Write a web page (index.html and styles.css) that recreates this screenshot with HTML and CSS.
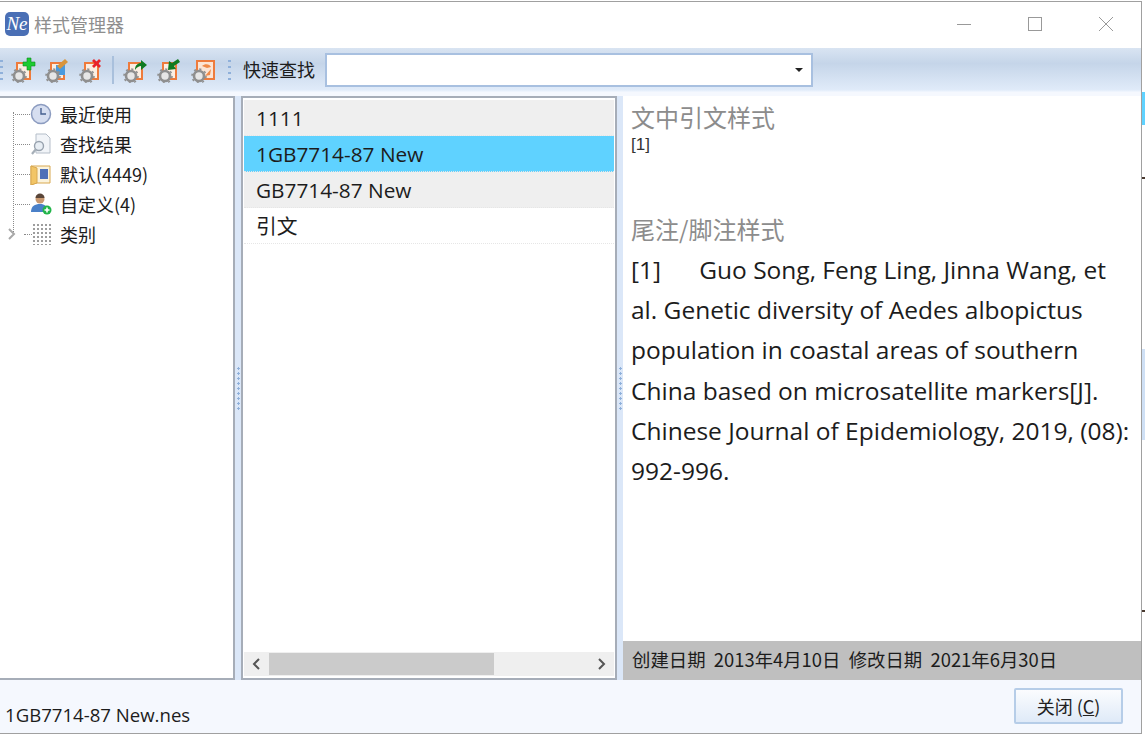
FILE: index.html
```html
<!DOCTYPE html>
<html lang="zh-CN">
<head>
    <meta charset="UTF-8">
    <title>样式管理器</title>
    <link rel="stylesheet" href="styles.css">
</head>
<body>
    <div class="window">
        <div class="titlebar">
            <div class="app-logo">Ne</div>
            <div class="title-text">样式管理器</div>
            <div class="win-buttons">
                <svg width="16" height="16" viewBox="0 0 16 16"><path d="M1 8.5h14" stroke="#999" fill="none"/></svg>
                <svg width="16" height="16" viewBox="0 0 16 16"><rect x="1.5" y="1.5" width="13" height="13" stroke="#999" fill="none"/></svg>
                <svg width="16" height="16" viewBox="0 0 16 16"><path d="M1 1l14 14M15 1L1 15" stroke="#999" fill="none"/></svg>
            </div>
        </div>

        <div class="toolbar">
            <span class="grip first"></span>
            <svg class="tool" viewBox="0 0 26 26"><use href="#page"/><use href="#gear"/><path d="M16 1h4v4h4v4h-4v4h-4V9h-4V5h4z" fill="#1ccb30" stroke="#0e8a1e" stroke-width=".6"/></svg>
            <svg class="tool" viewBox="0 0 26 26"><use href="#page"/><rect x="11" y="8" width="9" height="10" fill="#4a9ade"/><path d="M12 9l8-7 3 3-8 7z" fill="#d8953c"/><use href="#gear"/></svg>
            <svg class="tool" viewBox="0 0 26 26"><use href="#page"/><use href="#gear"/><path d="M14 3l7 7M21 3l-7 7" stroke="#e8222a" stroke-width="2.8" fill="none"/></svg>
            <span class="sep"></span>
            <svg class="tool" viewBox="0 0 26 26"><use href="#page"/><use href="#gear"/><path d="M12 13c0-5 3-7 6-7V3l6 5-6 5V9c-2 0-4 1-6 4z" fill="#0f7a20"/></svg>
            <svg class="tool" viewBox="0 0 26 26"><use href="#page"/><use href="#gear"/><path d="M12 4l3 2 6-4 2 3-6 4 2 3-8 1z" fill="#0f7a20"/></svg>
            <svg class="tool" viewBox="0 0 26 26"><rect x="6" y="4" width="17" height="18" fill="#fbe4d4" stroke="#ee7b3c" stroke-width="2"/><path d="M11 9c3-3 8-2 9 1l-4 1zM20 12l-1 6-5 1z" fill="#f08a48"/><use href="#gear"/></svg>
            <span class="grip"></span>
            <span class="search-label">快速查找</span>
            <div class="search-box"><span class="caret"></span></div>
        </div>

        <div class="panes">
            <div class="tree">
                <div class="tree-row">
                    <span class="dots"></span>
                    <svg class="node-icon" viewBox="0 0 22 22"><circle cx="11" cy="11" r="9.5" fill="#d6def0" stroke="#8c9cc0" stroke-width="1.5"/><path d="M11 5v6h5" stroke="#46608f" stroke-width="1.4" fill="none"/></svg>
                    <span>最近使用</span>
                </div>
                <div class="tree-row">
                    <span class="dots"></span>
                    <svg class="node-icon" viewBox="0 0 22 22"><path d="M6 1h10l4 4v15H6z" fill="#f1f4f8" stroke="#b5bec9"/><circle cx="9" cy="13" r="4.5" fill="#e8eef4" stroke="#98a2ae" stroke-width="1.4"/><path d="M6 16l-4 5" stroke="#a6afb8" stroke-width="2.2"/></svg>
                    <span>查找结果</span>
                </div>
                <div class="tree-row">
                    <span class="dots"></span>
                    <svg class="node-icon" viewBox="0 0 22 22"><path d="M1 3h19v17H6l-5 2z" fill="#fbf3dc" stroke="#d8a850"/><path d="M1 3l6 2v15l-6 2z" fill="#f2c566" stroke="#d8a850"/><rect x="10" y="6" width="8" height="10" fill="#4e70b8"/></svg>
                    <span>默认(4449)</span>
                </div>
                <div class="tree-row">
                    <span class="dots"></span>
                    <svg class="node-icon" viewBox="0 0 22 22"><circle cx="10" cy="6" r="4.5" fill="#c89870"/><path d="M5.5 5c0-6 9-6 9 0z" fill="#5a4638"/><path d="M1 19c0-6 4-8 9-8s7 2 7 8z" fill="#4a80c8"/><circle cx="17" cy="17" r="4.5" fill="#22b54a"/><path d="M17 14.5v5M14.5 17h5" stroke="#fff" stroke-width="1.6"/></svg>
                    <span>自定义(4)</span>
                </div>
                <div class="tree-row">
                    <svg class="expander" viewBox="0 0 10 12"><path d="M2 1l5 5-5 5" stroke="#a8a8a8" stroke-width="2" fill="none"/></svg>
                    <span class="dots short"></span>
                    <span class="grid-icon"></span>
                    <span>类别</span>
                </div>
                <div class="tree-line"></div>
            </div>

            <div class="splitter"><span class="split-grip"></span></div>

            <div class="list">
                <div class="list-rows">
                    <div class="list-row odd">1111</div>
                    <div class="list-row active">1GB7714-87 New</div>
                    <div class="list-row odd">GB7714-87 New</div>
                    <div class="list-row">引文</div>
                </div>
                <div class="hscroll">
                    <svg class="arrow" viewBox="0 0 10 12"><path d="M7 1L2 6l5 5" stroke="#555" stroke-width="2" fill="none"/></svg>
                    <div class="track"><div class="thumb"></div></div>
                    <svg class="arrow" viewBox="0 0 10 12"><path d="M3 1l5 5-5 5" stroke="#555" stroke-width="2" fill="none"/></svg>
                </div>
            </div>

            <div class="splitter"><span class="split-grip"></span></div>

            <div class="preview">
                <div class="preview-body">
                    <div class="preview-head">文中引文样式</div>
                    <div class="cite">[1]</div>
                    <div class="preview-head second">尾注/脚注样式</div>
                    <p class="ref">[1]&nbsp;&nbsp;&nbsp;&nbsp;&nbsp;&nbsp;Guo Song, Feng Ling, Jinna Wang, et al. Genetic diversity of Aedes albopictus population in coastal areas of southern China based on microsatellite markers[J]. Chinese Journal of Epidemiology, 2019, (08): 992-996.</p>
                </div>
                <div class="dates">创建日期&nbsp; 2013年4月10日&nbsp; 修改日期&nbsp; 2021年6月30日</div>
            </div>
        </div>

        <div class="footer">
            <div class="filename">1GB7714-87 New.nes</div>
            <button class="close-btn">关闭 (<u>C</u>)</button>
        </div>
    </div>

    <div class="backdrop">
        <span class="bit blue"></span>
        <span class="bit tick"></span>
        <span class="bit pale"></span>
        <span class="bit tick low"></span>
    </div>

    <svg class="defs" width="0" height="0">
        <defs>
            <g id="page"><rect x="6" y="6" width="13" height="16" fill="#fbeee2" stroke="#ee7b3c" stroke-width="2"/></g>
            <g id="gear">
                <circle cx="8" cy="19" r="5" fill="#e6e6e6" stroke="#8f8f8f" stroke-width="2.6"/>
                <circle cx="8" cy="19" r="7" fill="none" stroke="#8f8f8f" stroke-width="1.6" stroke-dasharray="2.2 3.3"/>
            </g>
        </defs>
    </svg>
</body>
</html>
```

FILE: styles.css
```css
* {
    box-sizing: border-box;
}
html, body {
    margin: 0;
    height: 736px;
    overflow: hidden;
}
body {
    background-color: #fff;
    font-family: "Liberation Sans", "Noto Sans CJK SC", sans-serif;
    color: #1c1c1c;
    padding: 1px 0 2px 0;
    display: flex;
}
.window {
    width: 1142px;
    height: 733px;
    flex-shrink: 0;
    display: flex;
    flex-direction: column;
    border-top: 1px solid #a0a0a0;
    border-right: 1px solid #a0a0a0;
    border-bottom: 1px solid #a0a0a0;
    background-color: #fff;
}
.backdrop {
    flex: 1;
    display: flex;
    flex-direction: column;
}
.bit {
    display: block;
}
.bit.blue {
    height: 33px;
    margin-top: 91px;
    background-color: #5fd2ff;
}
.bit.tick {
    height: 2px;
    margin-top: 52px;
    background-color: #4a3a30;
}
.bit.pale {
    height: 91px;
    margin-top: 170px;
    background-color: #cfe0f5;
}
.bit.tick.low {
    margin-top: 170px;
}
.defs {
    position: absolute;
}
.titlebar {
    height: 46px;
    display: flex;
    align-items: center;
    padding-left: 5px;
    padding-bottom: 2px;
    flex-shrink: 0;
}
.app-logo {
    width: 24px;
    height: 24px;
    border-radius: 5px;
    background-color: #4a6fb5;
    color: #fff;
    font-family: "Liberation Serif", serif;
    font-style: italic;
    font-size: 19px;
    line-height: 24px;
    text-align: center;
}
.title-text {
    margin-left: 5px;
    font-size: 18px;
    color: #8e8e8e;
    font-family: "Noto Sans CJK SC", sans-serif;
}
.win-buttons {
    margin-left: auto;
    display: flex;
    gap: 55px;
    padding-right: 27px;
}
.toolbar {
    height: 44px;
    flex-shrink: 0;
    display: flex;
    align-items: center;
    background: linear-gradient(to bottom, #d9e4f2 0%, #c5d5e9 35%, #e0ebf9 95%, #f2f7fe 100%);
}
.tool {
    width: 26px;
    height: 26px;
    margin-left: 8px;
}
.grip {
    width: 3px;
    height: 24px;
    margin-left: 11px;
    background-image: radial-gradient(circle, #8fb0da 1.4px, transparent 1.5px);
    background-size: 3px 6px;
}
.grip.first {
    margin-left: 0;
}
.sep {
    width: 2px;
    height: 28px;
    background-color: #a9c0dc;
    margin: 0 1px 0 7px;
}
.search-label {
    margin-left: 12px;
    margin-bottom: 3px;
    font-size: 18px;
    font-family: "Noto Sans CJK SC", sans-serif;
}
.search-box {
    width: 488px;
    height: 34px;
    margin-left: 10px;
    background-color: #fff;
    border: 2px solid #a8c0e0;
    position: relative;
}
.caret {
    position: absolute;
    right: 8px;
    top: 13px;
    border-left: 4px solid transparent;
    border-right: 4px solid transparent;
    border-top: 4px solid #222;
}
.panes {
    flex: 1;
    display: flex;
    min-height: 0;
    background-color: #dbe7f8;
    border-top: 4px solid #f5f8fe;
}
.tree {
    width: 235px;
    background-color: #fff;
    border: 2px solid #a6adb8;
    border-left: none;
    padding-top: 1px;
    position: relative;
    font-size: 18px;
    font-family: "Noto Sans CJK SC", sans-serif;
}
.tree-row {
    height: 30px;
    display: flex;
    align-items: center;
    padding-left: 15px;
    gap: 8px;
    position: relative;
}
.dots {
    width: 15px;
    border-top: 1px dotted #8a8a8a;
    margin-right: -8px;
}
.dots.short {
    width: 8px;
    margin-left: 9px;
}
.tree-line {
    position: absolute;
    left: 13px;
    top: 14px;
    height: 120px;
    border-left: 1px dotted #8a8a8a;
}
.node-icon {
    width: 22px;
    height: 22px;
}
.expander {
    position: absolute;
    left: 7px;
    width: 10px;
    height: 12px;
}
.grid-icon {
    width: 20px;
    height: 22px;
    background-image: radial-gradient(circle, #9a9a9a .7px, transparent .9px);
    background-size: 4px 4px;
}
.splitter {
    width: 6px;
    flex-shrink: 0;
    display: flex;
    align-items: center;
    justify-content: center;
}
.split-grip {
    width: 3px;
    height: 44px;
    background-image: radial-gradient(circle, #8fb0da 1.2px, transparent 1.4px);
    background-size: 3px 5px;
}
.list {
    width: 376px;
    background-color: #fff;
    border: 2px solid #a6adb8;
    display: flex;
    flex-direction: column;
    padding: 2px 1px 2px;
}
.list-rows {
    flex: 1;
    font-size: 20.8px;
    font-family: "Open Sans", "Noto Sans CJK SC", sans-serif;
}
.list-row {
    height: 36px;
    line-height: 36px;
    padding-left: 12px;
    border-bottom: 1px dotted #e6e6e6;
}
.list-row.odd {
    background-color: #efefef;
}
.list-row.active {
    background-color: #5fd2ff;
}
.hscroll {
    height: 24px;
    background-color: #efefef;
    display: flex;
    align-items: center;
}
.arrow {
    width: 10px;
    height: 12px;
    margin: 0 8px;
}
.track {
    flex: 1;
    height: 22px;
}
.thumb {
    width: 225px;
    height: 100%;
    margin-left: -1px;
    background-color: #cbcbcb;
}
.preview {
    flex: 1;
    display: flex;
    flex-direction: column;
    background-color: #fff;
    min-width: 0;
}
.preview-body {
    flex: 1;
    padding: 5px 7px 0 8px;
}
.preview-head {
    font-size: 24px;
    line-height: 32px;
    color: #8c8c8c;
    font-family: "Noto Sans CJK SC", sans-serif;
}
.preview-head.second {
    margin-top: 62px;
}
.cite {
    margin-top: 6px;
    font-size: 17px;
    line-height: 12px;
    color: #333;
}
.ref {
    margin: 5px 0 0;
    font-size: 24.5px;
    line-height: 40.2px;
    font-family: "Open Sans", "Noto Sans CJK SC", sans-serif;
}
.dates {
    height: 39px;
    line-height: 36px;
    background-color: #bfbfbf;
    padding-left: 9px;
    font-size: 18.4px;
    font-family: "Noto Sans CJK SC", sans-serif;
}
.footer {
    height: 53px;
    flex-shrink: 0;
    background-color: #f5f8fe;
    display: flex;
    align-items: center;
    justify-content: space-between;
    padding: 0 18px 0 5px;
}
.filename {
    font-size: 18.6px;
    font-family: "Open Sans", sans-serif;
    padding-top: 16px;
}
.close-btn {
    width: 109px;
    height: 36px;
    margin-bottom: 2px;
    border: 2px solid #b6cde8;
    border-radius: 2px;
    background: linear-gradient(to bottom, #fbfcfe, #dfeaf8);
    font-size: 18px;
    font-family: "Noto Sans CJK SC", sans-serif;
    color: #222;
}
```
